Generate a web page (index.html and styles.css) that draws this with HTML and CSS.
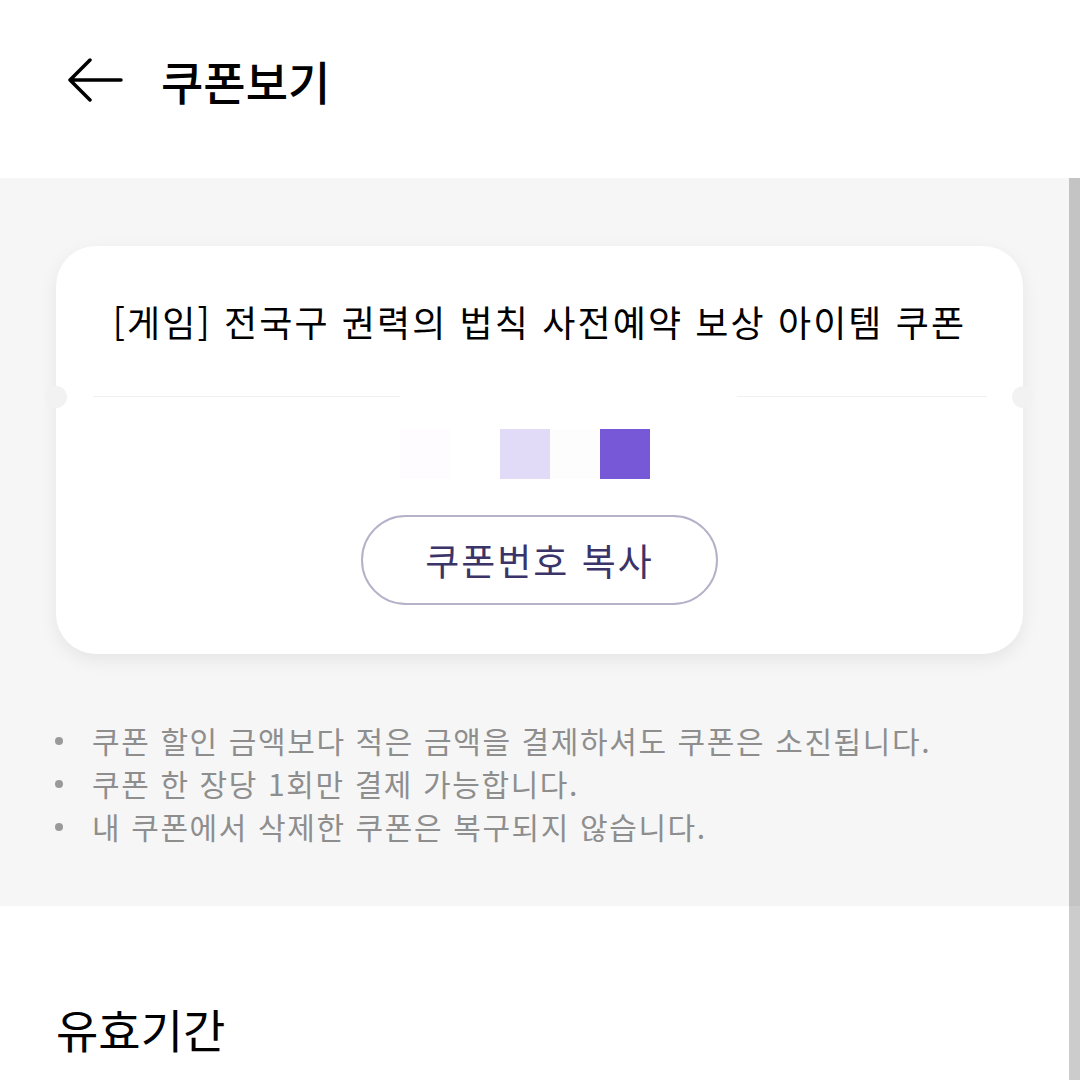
FILE: index.html
```html
<!DOCTYPE html>
<html lang="ko">
<head>
    <meta charset="UTF-8">
    <meta name="viewport" content="width=device-width, initial-scale=1.0">
    <title>쿠폰보기</title>
    <link rel="stylesheet" href="styles.css">
</head>
<body>
    <header class="top-bar">
        <button class="back-button" aria-label="뒤로">
            <svg width="56" height="46" viewBox="0 0 56 46">
                <path d="M3 22 H54 M23 2 L3 22 L23 42" fill="none" stroke="#000" stroke-width="3.5" stroke-linecap="round" stroke-linejoin="round"/>
            </svg>
        </button>
        <h1 class="page-title">쿠폰보기</h1>
    </header>

    <section class="coupon-area">
        <div class="coupon-card">
            <span class="notch notch-left"></span>
            <span class="notch notch-right"></span>

            <h2 class="coupon-name">[게임] 전국구 권력의 법칙 사전예약 보상 아이템 쿠폰</h2>

            <div class="divider">
                <span class="divider-line"></span>
                <span></span>
                <span class="divider-line"></span>
            </div>

            <div class="code-strip">
                <span class="cell cell-faint"></span>
                <span class="cell"></span>
                <span class="cell cell-light"></span>
                <span class="cell cell-faint2"></span>
                <span class="cell cell-dark"></span>
            </div>

            <div class="button-container">
                <button class="copy-button">쿠폰번호 복사</button>
            </div>
        </div>

        <ul class="notice-list">
            <li>쿠폰 할인 금액보다 적은 금액을 결제하셔도 쿠폰은 소진됩니다.</li>
            <li>쿠폰 한 장당 1회만 결제 가능합니다.</li>
            <li>내 쿠폰에서 삭제한 쿠폰은 복구되지 않습니다.</li>
        </ul>
    </section>

    <section class="info-area">
        <h3 class="info-title">유효기간</h3>
    </section>

    <div class="scrollbar"></div>
</body>
</html>
```

FILE: styles.css
```css
body {
    margin: 0;
    width: 1080px;
    height: 1080px;
    overflow: hidden;
    background-color: #fff;
    font-family: "Noto Sans CJK KR", "Noto Sans", sans-serif;
    color: #000;
    position: relative;
}
.top-bar {
    height: 178px;
    display: flex;
    align-items: flex-start;
    padding: 58px 0 0 67px;
    box-sizing: border-box;
}
.back-button {
    background: none;
    border: none;
    padding: 0;
    margin: 0;
    width: 56px;
    height: 46px;
    display: flex;
}
.page-title {
    margin: -10px 0 0 38px;
    font-size: 46px;
    font-weight: 500;
    line-height: 64px;
}
.coupon-area {
    background-color: #f6f6f6;
    padding: 68px 57px 58px 56px;
}
.coupon-card {
    position: relative;
    background-color: #fff;
    border-radius: 40px;
    box-shadow: 0 6px 18px rgba(0, 0, 0, 0.07);
    padding: 51px 0 49px;
}
.notch {
    position: absolute;
    top: 140px;
    width: 22px;
    height: 22px;
    border-radius: 50%;
    background-color: #f2f2f2;
}
.notch-left {
    left: -11px;
}
.notch-right {
    right: -11px;
}
.coupon-name {
    margin: 0;
    text-align: center;
    font-size: 36px;
    font-weight: 400;
    line-height: 49px;
    letter-spacing: 2.1px;
}
.divider {
    display: grid;
    grid-template-columns: 307px 337px 1fr;
    padding: 0 36px 0 37px;
    margin-top: 50px;
}
.divider-line {
    height: 1px;
    background-color: #f0f0f0;
}
.code-strip {
    display: flex;
    padding-left: 344px;
    margin-top: 32px;
}
.cell {
    width: 50px;
    height: 50px;
    background-color: #fff;
}
.cell-faint {
    background-color: #fefcfe;
}
.cell-light {
    background-color: #e2dbf7;
}
.cell-faint2 {
    background-color: #fdfdfd;
}
.cell-dark {
    background-color: #7758d6;
}
.button-container {
    display: flex;
    justify-content: center;
    margin-top: 36px;
}
.copy-button {
    width: 357px;
    height: 90px;
    border: 2px solid #b5b1c9;
    border-radius: 45px;
    background-color: #fff;
    color: #3b3468;
    font-family: inherit;
    font-size: 37px;
    letter-spacing: 2px;
    padding: 0;
}
.notice-list {
    list-style: none;
    margin: 65px 0 0;
    padding: 0;
    color: #8e8e8e;
    font-size: 30px;
    line-height: 43px;
    letter-spacing: 1.6px;
}
.notice-list li {
    position: relative;
    padding-left: 36px;
}
.notice-list li::before {
    content: "";
    position: absolute;
    left: -1px;
    top: 18px;
    width: 8px;
    height: 8px;
    border-radius: 50%;
    background-color: #9a9a9a;
}
.info-area {
    padding: 90px 56px 0;
}
.info-title {
    margin: 0;
    font-size: 46px;
    font-weight: 400;
    line-height: 64px;
}
.scrollbar {
    position: absolute;
    top: 178px;
    right: 0;
    width: 11px;
    bottom: 0;
    background-color: rgba(0, 0, 0, 0.2);
}
```
